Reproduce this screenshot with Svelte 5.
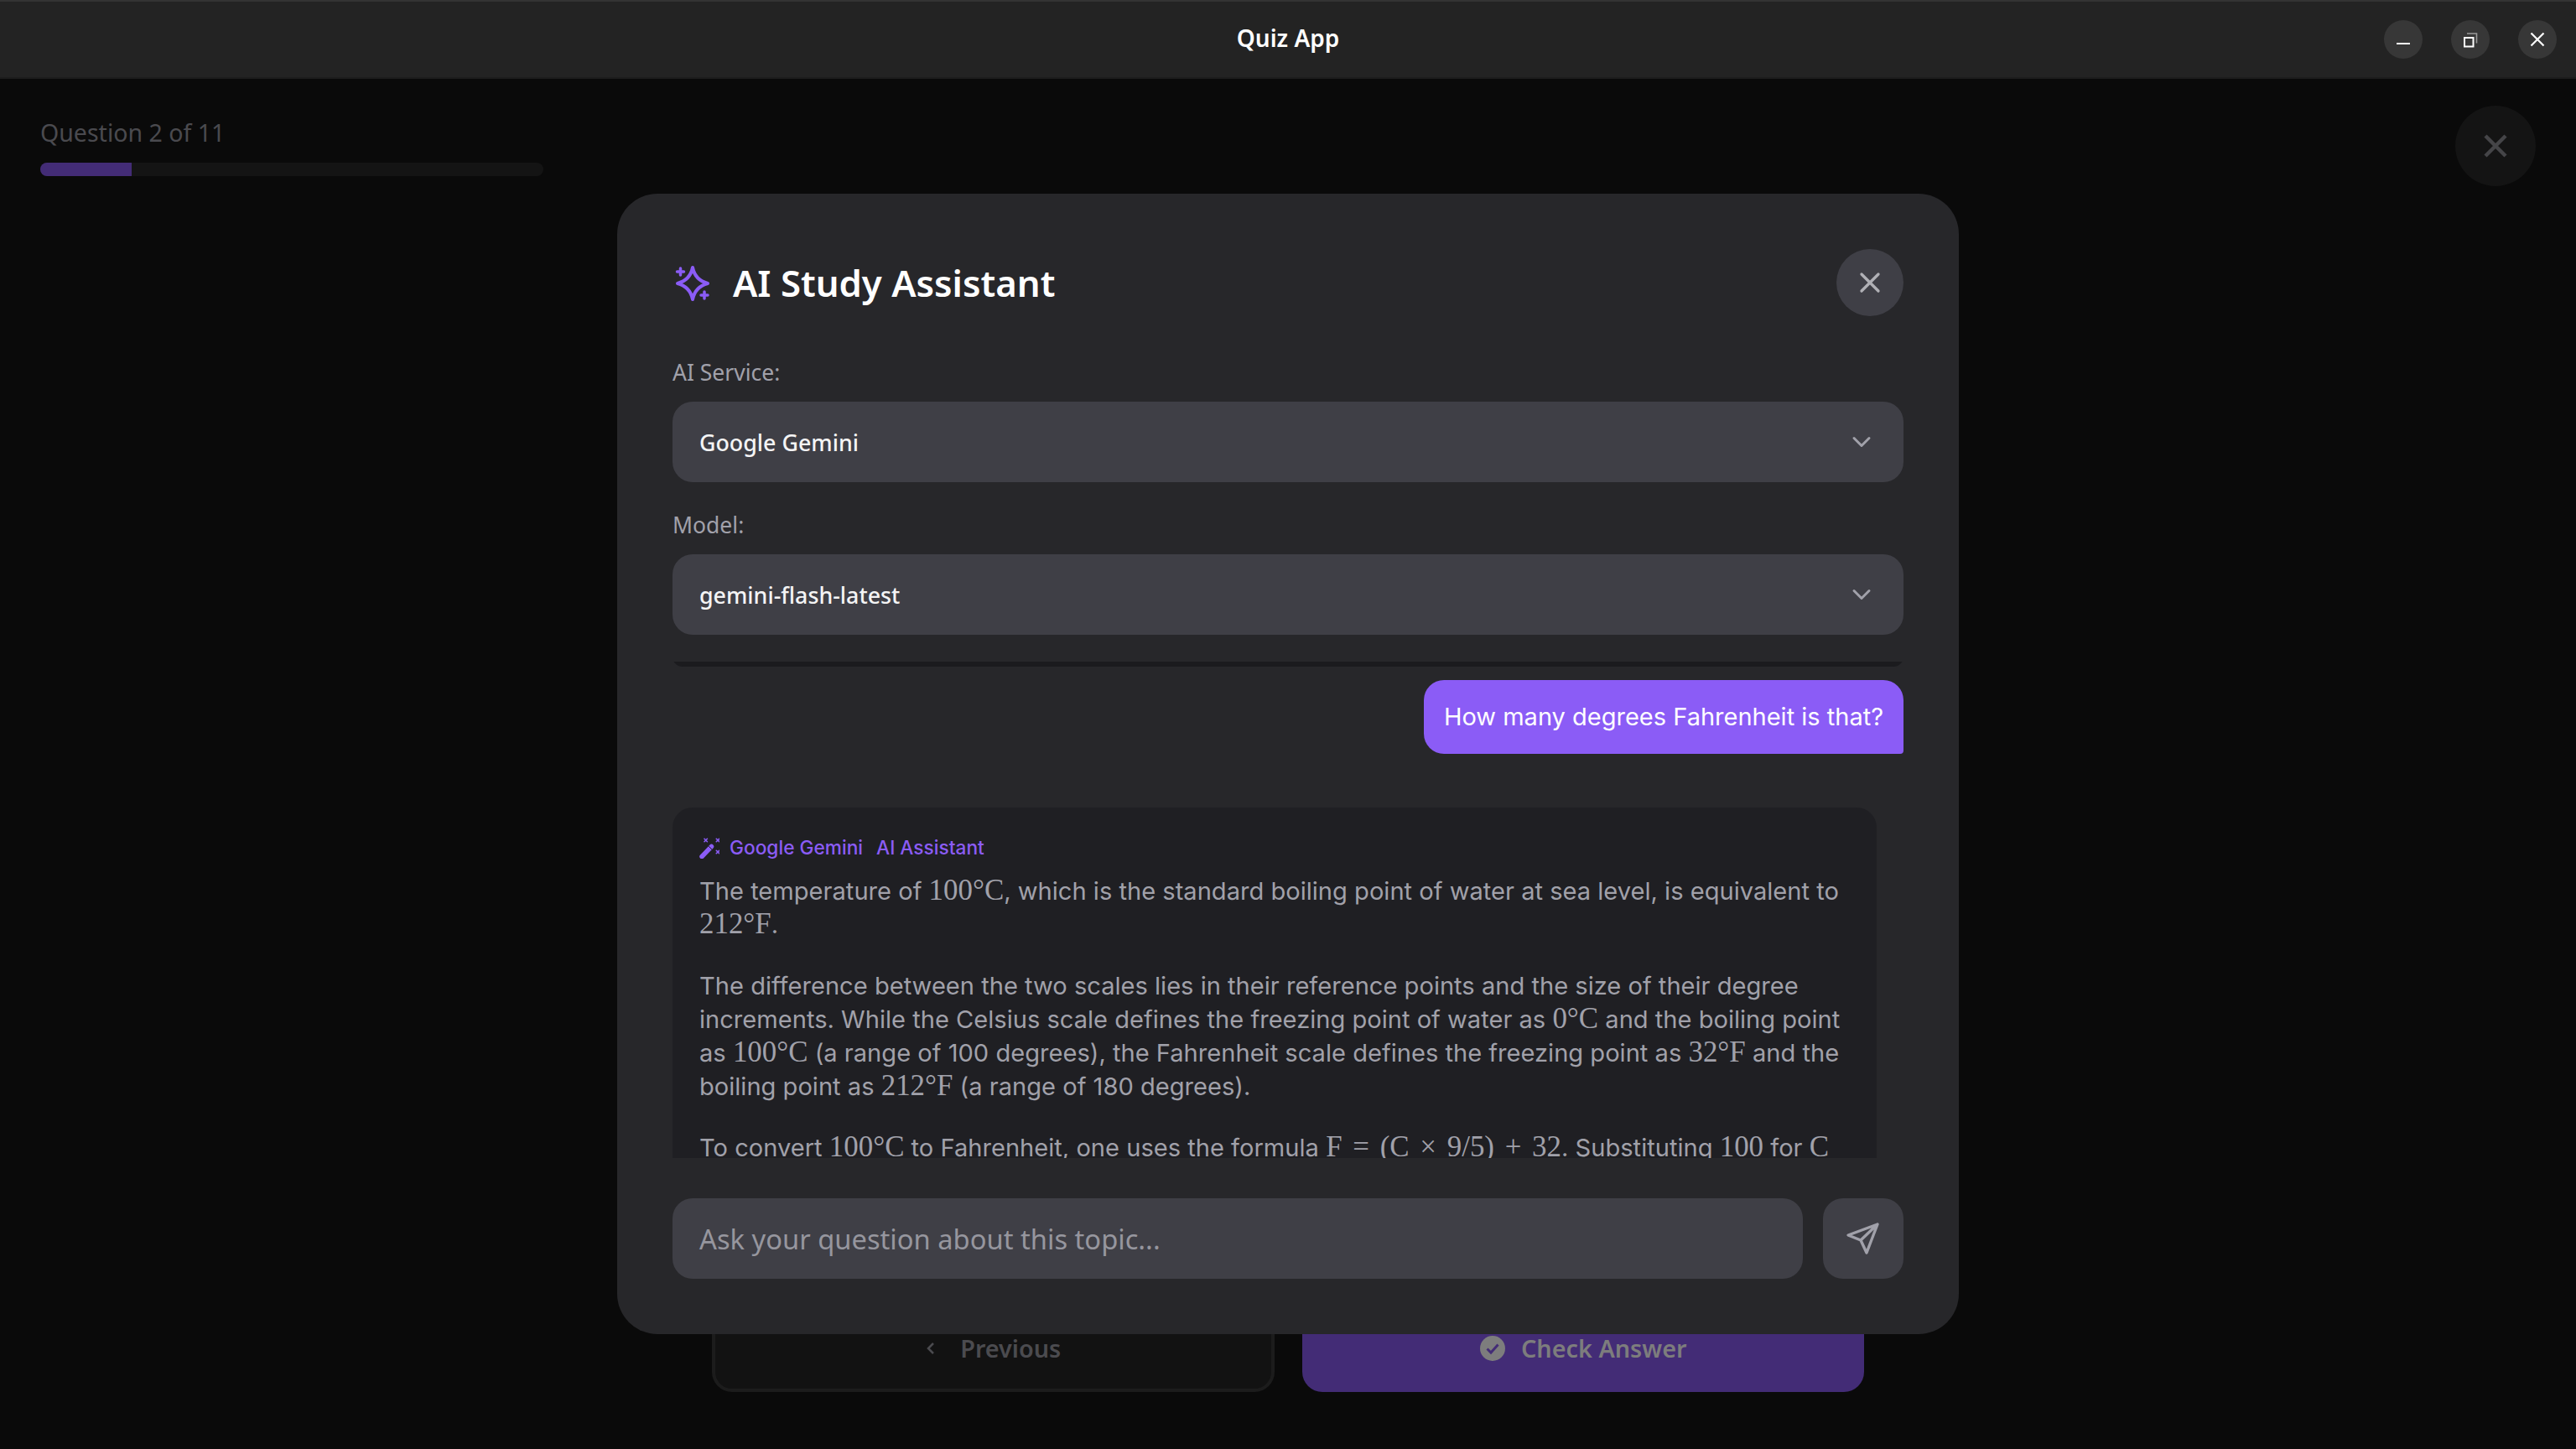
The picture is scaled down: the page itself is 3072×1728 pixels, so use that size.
<script>
  const serviceFields = [
    { label: "AI Service:", value: "Google Gemini" },
    { label: "Model:", value: "gemini-flash-latest" },
  ];
</script>

<div class="window">
  <header class="titlebar">
    <span class="app-title">Quiz App</span>
    <div class="win-controls">
      <button class="win-btn" aria-label="Minimize">
        <svg width="46" height="46" viewBox="0 0 46 46"><rect x="15" y="27" width="16" height="2" fill="#fff" /></svg>
      </button>
      <button class="win-btn" aria-label="Restore">
        <svg width="46" height="46" viewBox="0 0 46 46" fill="none">
          <path d="M19 16h11.500v11.500" stroke="#9a9a9a" stroke-width="1.600" />
          <rect x="16" y="21" width="10.500" height="10.500" stroke="#fff" stroke-width="2" />
        </svg>
      </button>
      <button class="win-btn" aria-label="Close">
        <svg width="46" height="46" viewBox="0 0 46 46"><path d="M15.500 15.500l15 15M30.500 15.500l-15 15" stroke="#fff" stroke-width="2.200" /></svg>
      </button>
    </div>
  </header>

  <main class="page">
    <div class="quiz-top">
      <div class="progress-block">
        <div class="progress-label">Question 2 of 11</div>
        <div class="progress-track"><div class="progress-fill" style="width: {(2 / 11) * 100}%"></div></div>
      </div>
      <button class="quit-btn" aria-label="Quit">
        <svg width="32" height="32" viewBox="0 0 32 32"><path d="M4 4l24 24M28 4L4 28" stroke="#454548" stroke-width="4.500" /></svg>
      </button>
    </div>

    <div class="quiz-nav">
      <button class="nav-btn prev">
        <svg width="14" height="20" viewBox="0 0 14 20" fill="none"><path d="M10 4l-6 6 6 6" stroke="#4b4b4f" stroke-width="2.500" /></svg>
        Previous
      </button>
      <button class="nav-btn check">
        <svg width="32" height="32" viewBox="0 0 32 32">
          <circle cx="16" cy="16" r="15" fill="#7d7d7d" />
          <path d="M9.500 16.500l4.500 4.500 8.500-9.500" fill="none" stroke="#432c76" stroke-width="3" />
        </svg>
        Check Answer
      </button>
    </div>

    <div class="overlay">
      <section class="modal">
        <div class="modal-head">
          <svg class="sparkle" width="44" height="44" viewBox="8 8 44 44" fill="none" stroke="#8b5cf6" stroke-linecap="round" stroke-linejoin="round">
            <path d="M30 12C32 22 37 28 48 31 37 34 32 40 30 50 28 40 23 34 12 31 23 28 28 22 30 12Z" stroke-width="4" />
            <path d="M15.500 13v8M11.500 17h8M44 41v8M40 45h8" stroke-width="3.500" />
          </svg>
          <h2>AI Study Assistant</h2>
          <button class="modal-close" aria-label="Close">
            <svg width="40" height="40" viewBox="0 0 24 24" fill="none" stroke="#b0b0b5" stroke-width="2" stroke-linecap="round"><path d="M18 6L6 18M6 6l12 12" /></svg>
          </button>
        </div>

        {#each serviceFields as field}
          <div class="field">
            <div class="field-label">{field.label}</div>
            <div class="select">
              <span>{field.value}</span>
              <svg width="36" height="36" viewBox="0 0 24 24" fill="none" stroke="#a1a1aa" stroke-width="2" stroke-linecap="round" stroke-linejoin="round"><path d="M6 9l6 6 6-6" /></svg>
            </div>
          </div>
        {/each}

        <div class="chat">
          <div class="prev-bubble"></div>
          <div class="user-bubble">How many degrees Fahrenheit is that?</div>
          <article class="ai-bubble">
            <div class="ai-head">
              <svg width="24" height="25" viewBox="9 7 24 25" fill="none" stroke="#8b5cf6" stroke-linecap="round">
                <path d="M12 29.500L23.500 17.500" stroke-width="5.500" />
                <path d="M20.500 17.500l3.200 3.200" stroke="#1f1f23" stroke-width="1" />
                <path d="M15 8.300l3.400 3.400M18.400 8.300L15 11.700M29.300 8.300l3.400 3.400M32.700 8.300l-3.400 3.400M29.300 22.300l3.400 3.400M32.700 22.300l-3.400 3.400" stroke-width="1.600" />
              </svg>
              <span>Google Gemini</span>
              <span>AI Assistant</span>
            </div>
            <p>The temperature of <span class="m">100°C</span>, which is the standard boiling point of water at sea level, is equivalent to <span class="m">212°F</span>.</p>
            <p>The difference between the two scales lies in their reference points and the size of their degree increments. While the Celsius scale defines the freezing point of water as <span class="m">0°C</span> and the boiling point as <span class="m">100°C</span> (a range of 100 degrees), the Fahrenheit scale defines the freezing point as <span class="m">32°F</span> and the boiling point as <span class="m">212°F</span> (a range of 180 degrees).</p>
            <p>To convert <span class="m">100°C</span> to Fahrenheit, one uses the formula <span class="m formula">F = (C × 9/5) + 32</span>. Substituting <span class="m">100</span> for <span class="m">C</span> gives <span class="m formula">(100 × 9/5) + 32</span>, which equals <span class="m">212</span>.</p>
          </article>
        </div>

        <div class="composer">
          <div class="ask-input">Ask your question about this topic...</div>
          <button class="send" aria-label="Send">
            <svg width="64" height="64" viewBox="0 0 64 64" fill="none" stroke="#a1a1aa" stroke-width="3.400" stroke-linecap="round" stroke-linejoin="round">
              <path d="M49 15L14 28l15 6 7 15zM29 34L49 15" />
            </svg>
          </button>
        </div>
      </section>
    </div>
  </main>
</div>

<style>
  :global(body) {
    margin: 0;
    background: #0a0a0a;
  }
  .window {
    width: 3072px;
    height: 1728px;
    display: flex;
    flex-direction: column;
    overflow: hidden;
    font-family: "Noto Sans", sans-serif;
  }
  button {
    border: none;
    padding: 0;
    font: inherit;
    display: flex;
    align-items: center;
    justify-content: center;
  }

  .titlebar {
    position: relative;
    height: 94px;
    box-sizing: border-box;
    flex: none;
    display: flex;
    align-items: center;
    justify-content: flex-end;
    padding-right: 23px;
    background: #232323;
    border-top: 2px solid #333;
    border-bottom: 2px solid #1d1d1d;
  }
  .app-title {
    position: absolute;
    left: 0;
    right: 0;
    bottom: 28px;
    text-align: center;
    font-size: 28px;
    font-weight: 600;
    color: #fff;
  }
  .win-controls {
    display: flex;
    gap: 34px;
  }
  .win-btn {
    width: 46px;
    height: 46px;
    border-radius: 50%;
    background: #373737;
  }

  .page {
    position: relative;
    flex: 1;
    display: flex;
    flex-direction: column;
    background: #0a0a0a;
  }
  .quiz-top {
    display: flex;
    justify-content: space-between;
    padding: 32px 48px 0;
  }
  .progress-block {
    width: 600px;
    padding-top: 12px;
  }
  .progress-label {
    font-size: 28.500px;
    line-height: 40px;
    color: #4a4a4f;
    margin-bottom: 16px;
  }
  .progress-track {
    height: 16px;
    border-radius: 8px;
    background: #141414;
    overflow: hidden;
  }
  .progress-fill {
    height: 100%;
    background: #432c76;
  }
  .quit-btn {
    width: 96px;
    height: 96px;
    border-radius: 50%;
    background: #141414;
  }

  .quiz-nav {
    margin: auto auto 68px;
    width: 1374px;
    display: grid;
    grid-template-columns: 1fr 1fr;
    gap: 33px;
  }
  .nav-btn {
    height: 100px;
    box-sizing: border-box;
    border-radius: 24px;
    font-size: 28.800px;
    font-weight: 600;
    padding-bottom: 5px;
  }
  .prev {
    gap: 28px;
    background: #121212;
    border: 4px solid #1c1c1c;
    color: #4b4b4f;
  }
  .check {
    gap: 18px;
    background: #432c76;
    color: #7d7d7d;
  }

  .overlay {
    position: absolute;
    inset: 0;
    display: flex;
    align-items: center;
    justify-content: center;
  }
  .modal {
    width: 1600px;
    height: 1360px;
    box-sizing: border-box;
    padding: 66px;
    border-radius: 48px;
    background: #27272a;
    display: flex;
    flex-direction: column;
  }
  .modal-head {
    display: flex;
    align-items: center;
    height: 80px;
    flex: none;
    margin-bottom: 16px;
  }
  .sparkle {
    margin: 0 26px 0 2px;
  }
  h2 {
    margin: 0;
    font-size: 43.700px;
    font-weight: 600;
    color: #fff;
  }
  .modal-close {
    margin-left: auto;
    width: 80px;
    height: 80px;
    border-radius: 50%;
    background: #3f3f46;
  }
  .field {
    flex: none;
    margin-top: 34px;
  }
  .field-label {
    font-size: 26.500px;
    line-height: 34px;
    color: #a1a1aa;
    margin-bottom: 18px;
  }
  .select {
    height: 96px;
    box-sizing: border-box;
    padding: 0 32px;
    border-radius: 24px;
    background: #3f3f46;
    display: flex;
    align-items: center;
    justify-content: space-between;
    font-size: 26.800px;
    font-weight: 500;
    color: #f4f4f5;
  }

  .chat {
    height: 592px;
    flex: none;
    margin-top: 32px;
    overflow: hidden;
    display: flex;
    flex-direction: column;
    font-family: Inter, sans-serif;
  }
  .prev-bubble {
    height: 24px;
    flex: none;
    margin-top: -18px;
    border-radius: 24px;
    background: #1b1b1e;
  }
  .user-bubble {
    align-self: flex-end;
    flex: none;
    margin-top: 16px;
    padding: 24px;
    border-radius: 24px 24px 4px 24px;
    background: #8b5cf6;
    color: #fff;
    font-size: 29px;
    line-height: 40px;
  }
  .ai-bubble {
    flex: none;
    margin-top: 64px;
    width: 1436px;
    box-sizing: border-box;
    padding: 32px;
    border-radius: 24px;
    background: #1f1f23;
    color: #a1a1aa;
    font-size: 29.100px;
    line-height: 40px;
  }
  .ai-head {
    display: flex;
    align-items: center;
    height: 32px;
    font-size: 22.700px;
    font-weight: 500;
    color: #8b5cf6;
    gap: 16px;
    margin-bottom: 16px;
  }
  .ai-head svg {
    margin-right: -4px;
  }
  p {
    margin: 0 0 33px;
  }
  .m {
    font-family: "Liberation Serif", serif;
    font-size: 1.200em;
    line-height: 1;
  }
  .formula {
    word-spacing: 4px;
  }

  .composer {
    flex: none;
    margin-top: 48px;
    display: flex;
    gap: 24px;
  }
  .ask-input {
    flex: 1;
    height: 96px;
    box-sizing: border-box;
    padding: 0 32px;
    border-radius: 24px;
    background: #3f3f46;
    display: flex;
    align-items: center;
    font-size: 32.700px;
    color: #96969e;
  }
  .send {
    width: 96px;
    height: 96px;
    border-radius: 24px;
    background: #3f3f46;
  }
</style>
